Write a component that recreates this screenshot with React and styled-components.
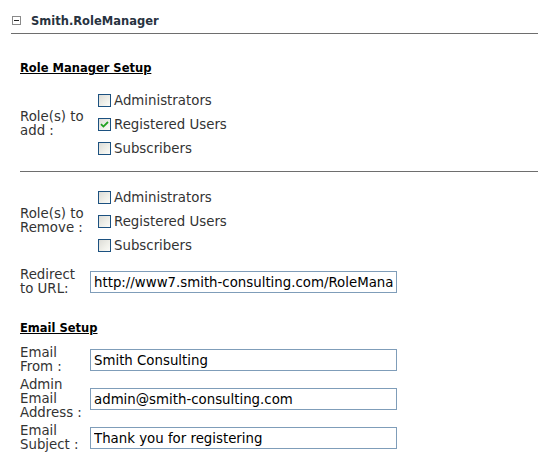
import styled, { createGlobalStyle } from 'styled-components';

const GlobalStyle = createGlobalStyle`
  body {
    margin: 0;
    background: #fff;
    font-family: "DejaVu Sans", Verdana, sans-serif;
    color: #333;
  }
`;

/* --- container --- */
const Module = styled.div`
  padding-left: 11px;
`;

const TitleBar = styled.div`
  display: flex;
  align-items: center;
  gap: 10px;
  height: 34px;
  padding: 9px 0 0 1px;
  box-sizing: border-box;
  border-bottom: 1px solid #6e6e6e;
`;

const Toggle = styled.span`
  box-sizing: border-box;
  width: 9px;
  height: 9px;
  border: 1px solid #8a8a8a;
  background: #fff;
  display: flex;
  align-items: center;
  justify-content: center;
  margin-top: -1px;

  &::after {
    content: '';
    width: 5px;
    height: 1px;
    background: #222;
  }
`;

const Title = styled.h2`
  margin: 0;
  font-size: 11.5px;
  font-weight: bold;
  color: #28333f;
`;

const Body = styled.div`
  padding: 26px 0 0 9px;
`;

const SectionHead = styled.h3`
  margin: 0 0 ${({ $after }) => $after || 12}px;
  font-size: 11.5px;
  font-weight: bold;
  color: #000;
  text-decoration: underline;
  line-height: 16px;
`;

const Row = styled.div`
  display: grid;
  grid-template-columns: 70px 1fr;
  align-items: center;
  margin-bottom: ${({ $gap }) => $gap || 0}px;
`;

const Label = styled.div`
  font-size: 13.33px;
  line-height: 14px;
  padding-right: 2px;
`;

const Divider = styled.hr`
  border: 0;
  border-top: 1px solid #6e6e6e;
  margin: 11px 0 13px;
`;

/* --- checkboxes --- */
const CheckList = styled.div`
  padding-left: 8px;
  display: flex;
  flex-direction: column;
`;

const CheckItem = styled.label`
  display: flex;
  align-items: center;
  height: 24px;
  font-size: 13.33px;
  gap: 3px;
`;

const Box = styled.span`
  box-sizing: border-box;
  width: 13px;
  height: 13px;
  border: 1px solid #1c5180;
  background: linear-gradient(135deg, #dcdcd7 0%, #f0f0ea 60%, #fbfbf8 100%);
  display: flex;
  align-items: center;
  justify-content: center;
`;

const Check = () => (
  <svg width="9" height="9" viewBox="0 0 9 9">
    <path d="M1 4.2 L3.4 6.6 L8 2" fill="none" stroke="#21a121" strokeWidth="1.8" />
  </svg>
);

function CheckBox({ label, checked }) {
  return (
    <CheckItem>
      <Box>{checked && <Check />}</Box>
      {label}
    </CheckItem>
  );
}

/* --- inputs --- */
const TextBox = styled.input`
  box-sizing: border-box;
  width: 307px;
  height: 22px;
  border: 1px solid #7f9db9;
  padding: 0 3px;
  font-family: "DejaVu Sans", Verdana, sans-serif;
  font-size: 13.33px;
  color: #000;
  background: #fff;
  outline: none;
`;

const FieldList = styled.div`
  display: flex;
  flex-direction: column;
  gap: 4px;
`;

const roles = ['Administrators', 'Registered Users', 'Subscribers'];

export default function App() {
  return (
    <>
      <GlobalStyle />
      <Module>
        <TitleBar>
          <Toggle />
          <Title>Smith.RoleManager</Title>
        </TitleBar>
        <Body>
          <SectionHead>Role Manager Setup</SectionHead>
          <Row>
            <Label>Role(s) to add :</Label>
            <CheckList>
              {roles.map((r) => (
                <CheckBox key={r} label={r} checked={r === 'Registered Users'} />
              ))}
            </CheckList>
          </Row>
          <Divider />
          <Row $gap={11}>
            <Label>Role(s) to Remove :</Label>
            <CheckList>
              {roles.map((r) => (
                <CheckBox key={r} label={r} />
              ))}
            </CheckList>
          </Row>
          <Row $gap={24}>
            <Label>Redirect to URL:</Label>
            <TextBox defaultValue="http://www7.smith-consulting.com/RoleManager/ThankYou.aspx" />
          </Row>
          <SectionHead $after={10}>Email Setup</SectionHead>
          <FieldList>
            <Row>
              <Label>Email From :</Label>
              <TextBox defaultValue="Smith Consulting" />
            </Row>
            <Row>
              <Label>Admin Email Address :</Label>
              <TextBox defaultValue="admin@smith-consulting.com" />
            </Row>
            <Row>
              <Label>Email Subject :</Label>
              <TextBox defaultValue="Thank you for registering" />
            </Row>
          </FieldList>
        </Body>
      </Module>
    </>
  );
}
